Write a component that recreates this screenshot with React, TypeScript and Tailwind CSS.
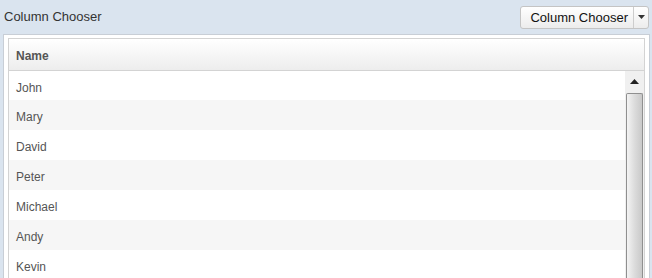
const names = ['John', 'Mary', 'David', 'Peter', 'Michael', 'Andy', 'Kevin'];

export default function App() {
  return (
    <div className="w-[652px] h-[278px] overflow-hidden bg-[#dae4ef] flex flex-col font-['Liberation_Sans',Arial,sans-serif]">
      {/* toolbar */}
      <div className="h-[34px] shrink-0 flex items-center justify-between pl-[4px] pr-[3px]">
        <span className="text-[13px] text-[#333]">Column Chooser</span>
        <div className="h-[23px] flex rounded-[3px] border border-[#c4c4c4] bg-gradient-to-b from-white to-[#ececec]">
          <button className="pl-[9px] pr-[5px] text-[13px] text-[#111] leading-none">Column Chooser</button>
          <div className="w-px bg-[#cdcdcd]" />
          <button className="w-[14px] flex items-center justify-center">
            <svg width="7" height="4" viewBox="0 0 7 4">
              <path d="M0 0h7L3.5 4z" fill="#333" />
            </svg>
          </button>
        </div>
      </div>

      {/* panel */}
      <div className="flex-1 ml-[3px] mr-[2px] border border-b-0 border-[#c8ced6] bg-white px-[4px] pt-[3px]">
        <div className="h-full border border-b-0 border-[#d3d3d3] flex flex-col">
          <div className="h-[32px] shrink-0 border-b border-[#d3d3d3] bg-gradient-to-b from-white to-[#ededed] flex items-center pl-[7px] pt-[2px]">
            <span className="text-[12px] font-bold text-[#555]">Name</span>
          </div>
          <div className="flex-1 flex min-h-0">
            <div className="flex-1 flex flex-col">
              {names.map((n, i) => (
                <div
                  key={n}
                  className={`${i === 0 ? 'h-[29px]' : 'h-[30px]'} shrink-0 flex items-center pl-[7px] pt-[4px] text-[12px] text-[#555] ${i % 2 === 1 ? 'bg-[#f6f6f6]' : 'bg-white'}`}
                >
                  {n}
                </div>
              ))}
            </div>
            <div className="w-[19px] shrink-0 bg-[#f0f0f0] flex flex-col items-center">
              <div className="h-[21px] w-full flex items-center justify-center">
                <svg width="9" height="5" viewBox="0 0 9 5">
                  <path d="M0 5L4.5 0L9 5z" fill="#222" />
                </svg>
              </div>
              <div className="flex-1 w-[17px] mt-[1px] border border-b-0 border-[#8f8f8f] rounded-t-[2px] bg-gradient-to-r from-[#f4f4f4] via-[#dcdcdc] to-[#c9c9c9]" />
            </div>
          </div>
        </div>
      </div>
    </div>
  );
}
